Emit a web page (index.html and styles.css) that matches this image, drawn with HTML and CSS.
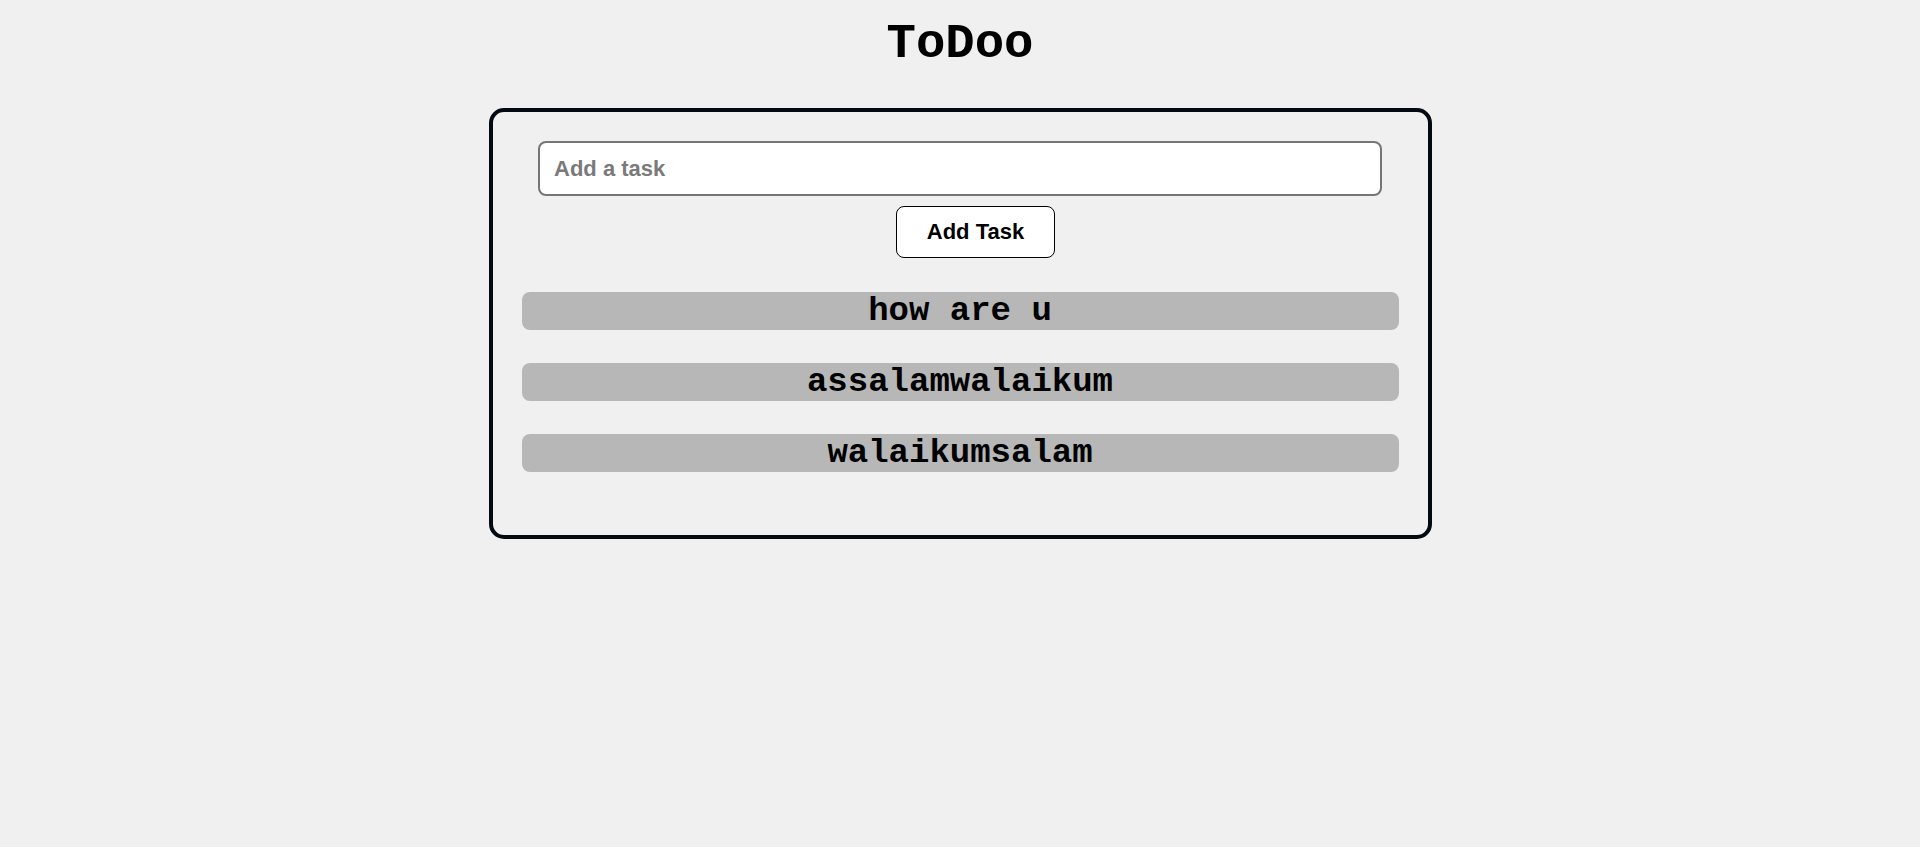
FILE: index.html
```html
<!DOCTYPE html>
<html lang="en">
<head>
<meta charset="utf-8">
<title>ToDoo</title>
<link rel="stylesheet" href="styles.css">
</head>
<body>
  <h1 class="title">ToDoo</h1>
  <main class="card">
    <form class="add-form">
      <input class="task-input" type="text" placeholder="Add a task" autofocus>
      <button class="add-btn" type="button">Add Task</button>
    </form>
    <ul class="task-list">
      <li class="task">how are u</li>
      <li class="task">assalamwalaikum</li>
      <li class="task">walaikumsalam</li>
    </ul>
  </main>
</body>
</html>
```

FILE: styles.css
```css
html, body {
  margin: 0;
  padding: 0;
  background: #f0f0f0;
}

body {
  font-family: "Liberation Sans", Arial, sans-serif;
}

.title {
  margin: 17px 0 37px;
  text-align: center;
  font-family: "Liberation Mono", "Courier New", monospace;
  font-weight: bold;
  font-size: 49px;
  line-height: 54px;
  color: #000;
}

.card {
  box-sizing: border-box;
  width: 943px;
  margin: 0 auto;
  padding: 29px 29px 63px;
  border: 4px solid #040a12;
  border-radius: 15px;
  background: #f0f0f0;
}

.add-form {
  display: flex;
  flex-direction: column;
  align-items: center;
  gap: 10px;
  margin: 0;
}

.task-input {
  box-sizing: border-box;
  width: 844px;
  height: 55px;
  padding: 0 14px;
  border: 2px solid #767676;
  border-radius: 8px;
  background: #fff;
  font-family: "Liberation Sans", Arial, sans-serif;
  font-weight: bold;
  font-size: 22px;
  color: #000;
  outline: none;
}

.task-input::placeholder {
  color: #7a7a7a;
}

.add-btn {
  box-sizing: border-box;
  width: 159px;
  height: 52px;
  margin-left: 31px;
  padding: 0;
  border: 1px solid #000;
  border-radius: 8px;
  background: #fff;
  font-family: "Liberation Sans", Arial, sans-serif;
  font-weight: bold;
  font-size: 22px;
  color: #000;
  cursor: pointer;
}

.task-list {
  list-style: none;
  margin: 34px 0 0;
  padding: 0;
  display: flex;
  flex-direction: column;
  gap: 33px;
}

.task {
  height: 38px;
  border-radius: 8px;
  background: #b7b7b7;
  text-align: center;
  font-family: "Liberation Mono", "Courier New", monospace;
  font-weight: bold;
  font-size: 34px;
  line-height: 38px;
  color: #000;
}
```
